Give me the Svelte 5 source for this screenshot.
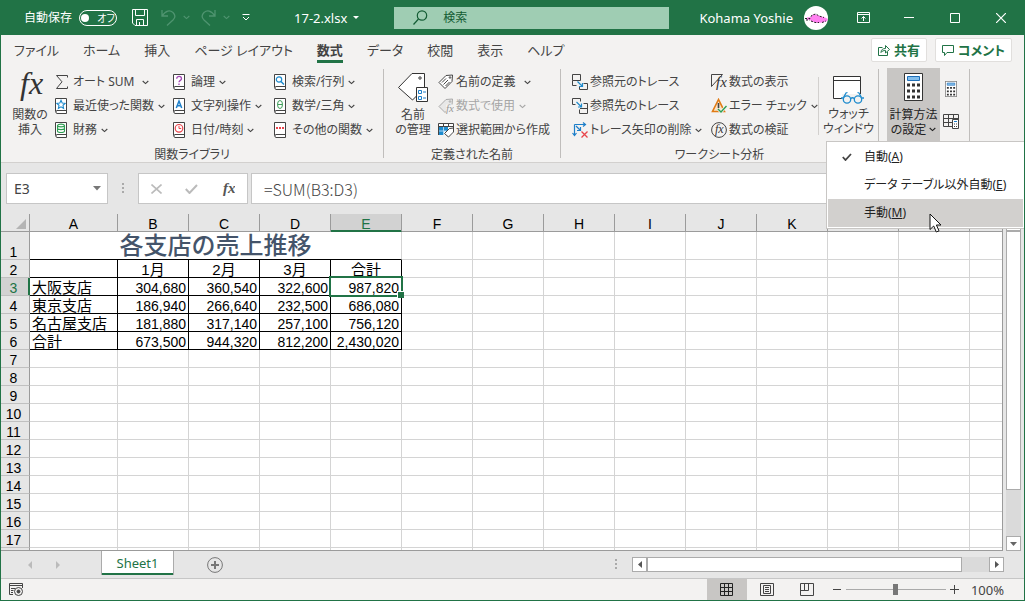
<script>
  const tabs = ['ファイル', 'ホーム', '挿入', 'ページ レイアウト', '数式', 'データ', '校閲', '表示', 'ヘルプ'];
  const library = [
    [
      { icon: 'sigma', text: 'オート SUM', arrow: true, wide: true },
      { icon: 'star', text: '最近使った関数', arrow: true },
      { icon: 'finance', text: '財務', arrow: true }
    ],
    [
      { icon: 'logic', text: '論理', arrow: true },
      { icon: 'text', text: '文字列操作', arrow: true },
      { icon: 'clock', text: '日付/時刻', arrow: true }
    ],
    [
      { icon: 'lookup', text: '検索/行列', arrow: true },
      { icon: 'math', text: '数学/三角', arrow: true },
      { icon: 'more', text: 'その他の関数', arrow: true }
    ]
  ];
  const names = [
    { icon: 'tag', text: '名前の定義', arrow: true, wide: true },
    { icon: 'tagfx', text: '数式で使用', arrow: true, disabled: true },
    { icon: 'select', text: '選択範囲から作成' }
  ];
  const audit = [
    [
      { icon: 'precedents', text: '参照元のトレース' },
      { icon: 'dependents', text: '参照先のトレース' },
      { icon: 'remove', text: 'トレース矢印の削除', arrow: true, wide: true }
    ],
    [
      { icon: 'show', text: '数式の表示' },
      { icon: 'error', text: 'エラー チェック', arrow: true, wide: true },
      { icon: 'evaluate', text: '数式の検証' }
    ]
  ];
  const cols = [...'ABCDEFGHIJKLM', ''];
  const rows = Array.from({ length: 17 }, (_, i) => i + 2);
  const data = {
    2: ['', '1月', '2月', '3月', '合計'],
    3: ['大阪支店', '304,680', '360,540', '322,600', '987,820'],
    4: ['東京支店', '186,940', '266,640', '232,500', '686,080'],
    5: ['名古屋支店', '181,880', '317,140', '257,100', '756,120'],
    6: ['合計', '673,500', '944,320', '812,200', '2,430,020']
  };
</script>

{#snippet chevron()}
  <svg class="chev" width="7" height="5" viewBox="0 0 7 5" fill="none" stroke="currentColor" stroke-width="1.100"><path d="M.7 1 3.500 3.600 6.300 1" /></svg>
{/snippet}

{#snippet fx(color, x, y, size)}
  <text {x} {y} font-family="Liberation Serif, serif" font-style="italic" font-size={size} fill={color} stroke="none">fx</text>
{/snippet}

{#snippet icon(name)}
  <svg class="ico" width="16" height="16" viewBox="0 0 16 16" fill="none" stroke="#444" aria-hidden="true">
    {#if name === 'sigma'}
      <path d="M12.500 3.500V1.500H1.500L7 7.800 1.500 14.500H12.500V12.500" />
    {:else if ['star', 'finance', 'logic', 'text', 'clock', 'lookup', 'math', 'more'].includes(name)}
      <path d="M.5 13.500V.5H11.500V12.500H2C.5 12.500.5 15.500 2 15.500H11.500V12" fill="#fff" />
      {#if name === 'star'}
        <path d="m6 2.300 1.200 2.700 2.900.3-2.100 2 .6 3L6 8.800l-2.600 1.500.6-3-2.100-2 2.900-.3z" stroke="#1e8bcd" stroke-width="1.100" />
      {:else if name === 'finance'}
        <path d="M2.500 3.500v5.500c0 2 7 2 7 0V3.500c0-1.800-7-1.800-7 0c0 1.800 7 1.800 7 0M2.500 6.300c0 1.800 7 1.800 7 0" stroke="#2e9e53" stroke-width="1.100" />
      {:else if name === 'logic'}
        <path d="M3.700 4.700c0-3 4.800-3 4.800 0C8.500 6.500 6 6.300 6 8.300M6 9.500v1.400" stroke="#a349b5" stroke-width="1.300" />
      {:else if name === 'text'}
        <path d="M3.300 10 6 3l2.700 7M4.200 7.800h3.600" stroke="#1e7fc9" stroke-width="1.500" />
      {:else if name === 'clock'}
        <circle cx="6" cy="6.300" r="3.800" stroke="#e8434a" stroke-width="1.200" /><path d="M6 3.800V6.500h2.200" stroke="#e8434a" />
      {:else if name === 'lookup'}
        <circle cx="5" cy="5.500" r="2.700" stroke="#1e8bcd" stroke-width="1.200" /><path d="m7 7.500 3 3" stroke="#1e8bcd" stroke-width="1.500" />
      {:else if name === 'math'}
        <ellipse cx="6" cy="6.500" rx="2.500" ry="4" stroke="#3d9e58" /><path d="M3.500 6.500h5" stroke="#3d9e58" />
      {:else}
        <path d="M2 6h2m1 0h2m1 0h2" stroke="#e8434a" stroke-width="2" />
      {/if}
    {:else if name === 'tag' || name === 'tagfx'}
      <path d="M1 8.500 8 1.500 14.500 1 14 7.500 7 14.500z" fill={name === 'tag' ? '#fff' : '#e8e8e8'} stroke={name === 'tag' ? '#444' : '#aaa'} />
      <circle cx="12" cy="3.500" r=".8" stroke={name === 'tag' ? '#444' : '#aaa'} />
      {#if name === 'tag'}
        <path d="m4 8.500 4-4M5.500 10.500l4.500-4.500M7.500 12l4-4" />
      {:else}
        <path d="M8 6.500h9v10H8z" fill="#f3f2f1" stroke="none" />
        {@render fx('#999', 8, 14, 11)}
      {/if}
    {:else if name === 'select'}
      <path d="M.5 1.500h15v11H.5z" fill="#fff" stroke="none" />
      <path d="M1 5h9v4H6v4H1z" fill="#1e8bcd" stroke="none" />
      <path d="M.5 9h8M5.500 5v8" stroke="#a9d3f2" />
      <path d="M.5 13V1.500h15V6M.5 4.500h15M5.500 1.500v3M10.500 1.500v3" />
      <path d="m6.500 11.500 5-5 4-.5v4l-5 5z" fill="#fff" />
    {:else if name === 'precedents'}
      <path d="M.5.500h8v6h-8zM.5 6.500v5h4M11.500 9.500h4v6h-8v-3" /><path d="m5.500 7.500 5 5M10.500 9v3.500H7" stroke="#1e8bcd" stroke-width="1.200" />
    {:else if name === 'dependents'}
      <path d="M3.500 6.500h-3v-6h8v3M11.500 5.500h4v10h-8v-4M8 10.500h7.500" /><path d="m4.500 4 5 5M9.500 5.500V9H6" stroke="#1e8bcd" stroke-width="1.200" />
    {:else if name === 'remove'}
      <path d="M2.500 2.500V13M.5 11l2 2.500 2-2.500M2.500 2.500H13M11 .5l2.500 2-2.500 2M4 4l4 4M8.500 5v3.500H5" stroke="#1e7fc9" stroke-width="1.200" />
      <path d="m9.500 9.500 6 6m0-6-6 6" stroke="#e8434a" stroke-width="1.300" />
    {:else if name === 'show'}
      <path d="M11.500.5H.5v12L11.500.5" />{@render fx('#333', 5, 13, 15)}
    {:else if name === 'error'}
      <path d="M7.500 1.500 1.500 13.500h12z" fill="#fbe3c8" stroke="#e07b14" stroke-width="1.600" /><path d="M7.500 5v5M7.500 11v1.500" stroke-width="1.600" />
      <path d="m7 11 3 3 5.500-6" stroke="#f3f2f1" stroke-width="3" /><path d="m7 11 3 3 5.500-6" stroke="#2e9e53" stroke-width="1.400" />
    {:else if name === 'evaluate'}
      <circle cx="8" cy="8" r="7.400" />{@render fx('#333', 4, 11, 12)}
    {/if}
  </svg>
{/snippet}

{#snippet command(c)}
  <button class="cmd" class:wide={c.wide} disabled={c.disabled}>
    {@render icon(c.icon)}<span>{c.text}</span>
    {#if c.arrow}{@render chevron()}{/if}
  </button>
{/snippet}

{#snippet calculator(w, h)}
  <svg width={w} height={h} viewBox="0 0 19 28" preserveAspectRatio="none" aria-hidden="true">
    <path d="M.5.500h18v27H.5z" fill="#fff" stroke="#333" /><path d="M3.500 3.500h12v4h-12z" fill="#83beec" stroke="#1e6fb8" />
    <path d="M3 12h13M3 18h13M3 24h13" stroke="#333" stroke-width="3" stroke-dasharray="3 2" />
  </svg>
{/snippet}

<div class="window">
  <header class="title">
    <div class="quick">
      <span id="autosave">自動保存</span>
      <button class="switch" role="switch" aria-checked="false" aria-labelledby="autosave"><i></i>オフ</button>
      <button class="save" aria-label="上書き保存"><svg width="16" height="17" viewBox="0 0 16 17" fill="none" stroke="#fff"><path d="M.5.500h15v16H3L.5 14zM3.500.5v6h9v-6M4.500 16.500v-6h7v6M7.500 13v3" /></svg></button>
      <button class="undo dim" aria-label="元に戻す"><svg width="15" height="17" viewBox="0 0 15 17" fill="none" stroke="currentColor" stroke-width="1.300"><path d="M1 1v6h6M1 7C5 1 9 1 12 3.500c3 3 1.500 6 0 7.500L6 16.500" /></svg>{@render chevron()}</button>
      <button class="redo dim" aria-label="やり直し"><svg width="15" height="17" viewBox="0 0 15 17" fill="none" stroke="currentColor" stroke-width="1.300"><path d="M14 1v6H8M14 7C10 1 6 1 3 3.500c-3 3-1.500 6 0 7.500l6 5.500" /></svg>{@render chevron()}</button>
      <button aria-label="クイック アクセス ツール バーのユーザー設定"><svg width="8" height="7" viewBox="0 0 8 7" fill="none" stroke="#fff"><path d="M.5.500h7M1 3l3 3 3-3" /></svg></button>
    </div>
    <button class="doc">17-2.xlsx <svg width="6" height="3" viewBox="0 0 6 3"><path d="M0 0h6L3 3z" fill="#fff" /></svg></button>
    <label class="search">
      <svg width="15" height="15" viewBox="0 0 15 15" fill="none" stroke="#135c34" stroke-width="1.200"><circle cx="9" cy="5.500" r="4.700" /><path d="M5.500 9 .5 14.500" /></svg>
      <input type="text" placeholder="検索" aria-label="検索" />
    </label>
    <button class="user">Kohama Yoshie
      <svg width="24" height="24" viewBox="0 0 24 24"><circle cx="12" cy="12" r="12" fill="#fff" /><path d="M3 11.500 7 11l1.500-2.500H12l4 1.500 5 1.500 3 1.500-1 2-4 1.500-6 .5-5-1.500-2-1.500-4-.5z" fill="#ff80f0" /><path d="M1 12.500h5l2-3.500 4-1 3 2 5 1.500M2 14h4m1 1 4 1.500h4m3 0 4-1.500" fill="none" stroke="#222" stroke-dasharray="2 1.500" /></svg>
    </button>
    <div class="controls">
      <button aria-label="リボンの表示オプション"><svg width="13" height="11" viewBox="0 0 13 11" fill="none" stroke="#fff"><path d="M.5.500h12v10H.5zM.5 2.500h12M6.500 9V4.500M4.500 6.500l2-2 2 2" /></svg></button>
      <button aria-label="最小化"><svg width="10" height="11" viewBox="0 0 10 11" stroke="#fff"><path d="M0 5.500h10" /></svg></button>
      <button aria-label="最大化"><svg width="10" height="10" viewBox="0 0 10 10" fill="none" stroke="#fff"><path d="M.5.500h9v9h-9z" /></svg></button>
      <button aria-label="閉じる"><svg width="10" height="10" viewBox="0 0 10 10" stroke="#fff" stroke-width="1.200"><path d="m0 0 10 10M10 0 0 10" /></svg></button>
    </div>
  </header>

  <nav class="tabs">
    {#each tabs as t}<button class:active={t === '数式'}><span>{t}</span></button>{/each}
    <div class="actions">
      <button><svg width="12" height="12" viewBox="0 0 12 12" fill="none" stroke="#217346"><path d="M4.500 3.500h-4v8h9V8M3 8.500c0-3 2-4 4.500-4v-3l4 4-4 3.500V6.500C5.500 6.500 4 7 3 8.500z" /></svg>共有</button>
      <button><svg width="12" height="11" viewBox="0 0 12 11" fill="none" stroke="#217346"><path d="M.5.500h11v7H5l-2.500 3v-3h-2z" /></svg>コメント</button>
    </div>
  </nav>

  <section class="ribbon">
    <div class="group library">
      <div class="body">
        <button class="big"><svg width="28" height="31" viewBox="0 0 28 31" aria-hidden="true">{@render fx('#333', 4, 22, 32)}</svg><span>関数の<br />挿入</span></button>
        {#each library as list}<div class="list">{#each list as c}{@render command(c)}{/each}</div>{/each}
      </div>
      <h2>関数ライブラリ</h2>
    </div>
    <div class="group names">
      <div class="body">
        <button class="big">
          <svg width="30" height="31" viewBox="0 0 30 31" fill="none" stroke="#333"><path d="M14 1.500h12.500V16l-12 12L.5 15.500z" fill="#fff" /><circle cx="22" cy="6" r="1.200" /><path d="M18.500 15.500h11v14h-11z" fill="#fff" /><path d="M20.500 18.500h3v3h-3zM20.500 24.500h3v3h-3zM25 20h3M25 26h3" stroke="#1e7fc9" /></svg>
          <span>名前<br />の管理</span>
        </button>
        <div class="list">{#each names as c}{@render command(c)}{/each}</div>
      </div>
      <h2>定義された名前</h2>
    </div>
    <div class="group audit">
      <div class="body">
        {#each audit as list}<div class="list">{#each list as c}{@render command(c)}{/each}</div>{/each}
        <button class="big watch">
          <svg width="31" height="29" viewBox="0 0 31 29" fill="none" stroke="#333"><path d="M.5.500h27v22H.5zM.5 4.500h27" fill="#fff" /><path d="M9 18h22v9H9z" fill="#f3f2f1" stroke="none" /><g stroke="#1e8bcd" stroke-width="1.300"><circle cx="14" cy="23.500" r="3.700" /><circle cx="25" cy="23.500" r="3.700" /><path d="M17.700 22.500c1-1 2.600-1 3.600 0M10.500 21.500 13 17l1.500-.5M28.500 21.500 26 17l-1.500-.5M8 22h2.500M28.500 22H31" /></g></svg>
          <span>ウォッチ<br />ウィンドウ</span>
        </button>
      </div>
      <h2>ワークシート分析</h2>
    </div>
    <div class="group calc">
      <div class="body">
        <button class="big pressed" aria-expanded="true">{@render calculator(19, 28)}<span>計算方法<br />の設定 {@render chevron()}</span></button>
        <div class="minis">
          <button aria-label="再計算実行">{@render calculator(12, 16)}</button>
          <button aria-label="シート再計算"><svg width="16" height="16" viewBox="0 0 16 16" fill="none" stroke="#444"><path d="M.5 1.500h15v12H.5zM.5 5.500h15M.5 9.500h9M5.500 1.500v12M10.500 1.500v5" /><path d="M9.500 6.500h6v9h-6z" fill="#fff" /><path d="M11 8.500h3" stroke="#1e7fc9" /><path d="M11 11h3M11 13.500h3" stroke-dasharray="1 1" /></svg></button>
        </div>
      </div>
    </div>
    <div class="menu" role="menu">
      <button role="menuitem"><svg width="10" height="8" viewBox="0 0 10 8" fill="none" stroke="#444" stroke-width="1.800"><path d="m.8 4 2.700 3L9 1" /></svg><span>自動(<u>A</u>)</span></button>
      <button role="menuitem"><span>データ テーブル以外自動(<u>E</u>)</span></button>
      <button role="menuitem" class="hover"><span>手動(<u>M</u>)</span></button>
      <svg class="pointer" width="13" height="20" viewBox="0 0 13 20"><path d="M1 1v15.500l3.700-3.500 2.600 6 2.700-1.200-2.600-5.800H12z" fill="#fff" stroke="#111" /></svg>
    </div>
  </section>

  <div class="formula">
    <label class="namebox"><input value="E3" aria-label="名前ボックス" /><svg width="8" height="5" viewBox="0 0 8 5"><path d="M0 0h8L4 4.500z" fill="#777" /></svg></label>
    <span class="dots"></span>
    <div class="entry">
      <button aria-label="キャンセル"><svg width="11" height="10" viewBox="0 0 11 10" stroke="#bbb" stroke-width="1.600"><path d="m.5.500 10 9M10.500.5l-10 9" /></svg></button>
      <button aria-label="入力"><svg width="13" height="10" viewBox="0 0 13 10" fill="none" stroke="#bbb" stroke-width="2"><path d="m.8 5 3.700 4L12 1" /></svg></button>
      <button aria-label="関数の挿入"><svg width="14" height="16" viewBox="0 0 14 16" font-weight="700">{@render fx('#555', 2, 12, 15)}</svg></button>
    </div>
    <input class="fbox" value="=SUM(B3:D3)" aria-label="数式バー" />
  </div>

  <main>
    <div class="sheet">
      <table>
        <colgroup><col class="c0" /><col class="ca" />{#each cols.slice(1) as c}<col class="cn" />{/each}</colgroup>
        <thead>
          <tr><th class="corner"><svg width="10" height="10" viewBox="0 0 10 10"><path d="M10 0v10H0z" fill="#b4b4b4" /></svg></th>{#each cols as c}<th class:sel={c === 'E'}>{c}</th>{/each}</tr>
        </thead>
        <tbody>
          <tr class="first"><th>1</th><td colspan="5" class="heading">各支店の売上推移</td>{#each cols.slice(5) as c}<td></td>{/each}</tr>
          {#each rows as r}
            <tr>
              <th class:sel={r === 3}>{r < 18 ? r : ''}</th>
              {#each cols as c, i}
                <td class:boxed={r < 7 && i < 5} class:mid={r === 2} class:num={r > 2 && i > 0} class:current={r === 3 && i === 4}>{data[r]?.[i] ?? ''}</td>
              {/each}
            </tr>
          {/each}
        </tbody>
      </table>
    </div>
    <div class="vscroll">
      <button aria-label="上へ"><svg width="7" height="4" viewBox="0 0 7 4"><path d="M0 4h7L3.500 0z" fill="#666" /></svg></button>
      <div class="track"><div class="thumb"></div></div>
      <button aria-label="下へ"><svg width="7" height="4" viewBox="0 0 7 4"><path d="M0 0h7L3.500 4z" fill="#666" /></svg></button>
    </div>
  </main>

  <div class="sheets">
    <div class="arrows"><svg width="4" height="8" viewBox="0 0 4 8"><path d="M4 0v8L0 4z" fill="#bbb" /></svg><svg width="4" height="8" viewBox="0 0 4 8"><path d="M0 0v8l4-4z" fill="#bbb" /></svg></div>
    <button class="tab">Sheet1</button>
    <button class="add" aria-label="新しいシート"><svg width="16" height="16" viewBox="0 0 16 16" fill="none" stroke="#777"><circle cx="8" cy="8" r="7.400" /><path d="M8 4v8M4 8h8" stroke-width="2" /></svg></button>
    <span class="dots"></span>
    <div class="hscroll">
      <button aria-label="左へ"><svg width="4" height="7" viewBox="0 0 4 7"><path d="M4 0v7L0 3.500z" fill="#555" /></svg></button>
      <div class="track"><div class="thumb"></div></div>
      <button aria-label="右へ"><svg width="4" height="7" viewBox="0 0 4 7"><path d="M0 0v7l4-3.500z" fill="#555" /></svg></button>
    </div>
  </div>

  <footer>
    <button class="macro" aria-label="マクロの記録"><svg width="15" height="13" viewBox="0 0 15 13" fill="none" stroke="#444"><path d="M4 11.500H.5V.500h13V5M.5 2.500h13M2 5.500h4M2 7.500h2.500M2 9.500h2" /><circle cx="9.500" cy="8.500" r="4" fill="#f3f2f1" /><circle cx="9.500" cy="8.500" r="1.500" fill="#444" /></svg></button>
    <div class="views">
      <button class="on" aria-label="標準"><svg width="13" height="13" viewBox="0 0 13 13" fill="none" stroke="#222"><path d="M.5.500h12v12H.5zM.5 4.500h12M.5 8.500h12M4.500.5v12M8.500.5v12" /></svg></button>
      <button aria-label="ページ レイアウト"><svg width="14" height="13" viewBox="0 0 14 13" fill="none" stroke="#444"><path d="M.5.500h13v12H.5zM3.500 2.500h7v8h-7zM5 4.500h4M5 6.500h4M5 8.500h4" /></svg></button>
      <button aria-label="改ページ プレビュー"><svg width="14" height="13" viewBox="0 0 14 13" fill="none" stroke="#444"><path d="M.5.500h13v12H.5zM.5 7.500h8v-7M4.500.5v7" /></svg></button>
    </div>
    <button class="zoomer" aria-label="縮小"><svg width="9" height="9" viewBox="0 0 9 9" stroke="#444"><path d="M0 4.500h8" /></svg></button>
    <input type="range" min="0" max="100" value="50" aria-label="ズーム" />
    <button class="zoomer" aria-label="拡大"><svg width="9" height="9" viewBox="0 0 9 9" stroke="#444"><path d="M0 4.500h9M4.500 0v9" /></svg></button>
    <span class="pct">100%</span>
  </footer>
</div>

<style>
  :global(body) { margin: 0; }
  * { box-sizing: border-box; }
  .window { display: flex; flex-direction: column; height: 100vh; overflow: hidden; border: 1px solid #217346; border-top: 0; background: #e6e6e6; color: #444; font: 12px/16px "Noto Sans", "Noto Sans CJK JP", sans-serif; font-feature-settings: "palt"; }
  button { display: flex; align-items: center; justify-content: center; flex: none; padding: 0; border: 0; background: none; color: inherit; font: inherit; font-feature-settings: inherit; white-space: nowrap; }
  input { min-width: 0; margin: 0; padding: 0; border: 0; outline: 0; background: none; color: inherit; font: inherit; }
  svg { display: block; flex: none; }

  .title { display: flex; align-items: center; flex: none; height: 35px; background: #217346; color: #fff; }
  .quick { display: flex; align-items: center; padding-left: 23px; }
  .switch { width: 38px; height: 16px; margin: 0 15px 0 7px; gap: 8px; border: 1px solid #fff; border-radius: 8px; font-size: 10px; }
  .switch i { width: 8px; height: 8px; border-radius: 50%; background: #fff; }
  .undo { margin-left: 13px; }
  .redo { margin: 0 12px 0 11px; }
  .dim { gap: 7px; color: #4f9470; }
  .doc { gap: 6px; margin: 0 35px 0 44px; font-size: 13px; }
  .search { display: flex; align-items: center; flex: 1; gap: 15px; height: 22px; padding-left: 19px; background: #9fcdb3; color: #135c34; }
  .search input { flex: 1; }
  .search input::placeholder { color: #135c34; opacity: 1; }
  .user { gap: 11px; margin: 0 12px 0 30px; font-size: 13px; }
  .controls { display: flex; }
  .controls button { width: 46px; height: 34px; }

  .tabs { display: flex; flex: none; height: 31px; padding-left: 1px; background: #f3f2f1; font-size: 13px; }
  .tabs > button { padding: 0 12px; }
  .tabs > button span { height: 25px; padding-top: 4px; border-bottom: 3px solid transparent; }
  .tabs .active { font-weight: 700; }
  .tabs .active span { border-color: #217346; }
  .actions { display: flex; gap: 8px; margin: 3px 12px 4px auto; }
  .actions button { gap: 4px; padding: 0 6px; border: 1px solid #e1dfdd; border-radius: 2px; background: #fff; color: #217346; font-weight: 700; }

  .ribbon { display: flex; position: relative; flex: none; height: 97px; padding-top: 3px; border-bottom: 1px solid #d2d0ce; background: #f3f2f1; }
  .group { display: flex; flex-direction: column; flex: none; height: 89px; border-right: 1px solid #c0bebc; }
  .body { display: grid; height: 72px; }
  .library .body { grid-template-columns: 54px 118px 101px 109px; }
  .names .body { grid-template-columns: 54px 122px; }
  .audit .body { grid-template-columns: 139px 118px 60px; }
  .calc .body { grid-template-columns: 53px 29px; padding-left: 8px; }
  h2 { margin: 0; padding-top: 6px; font-size: 12px; font-weight: 400; line-height: 16px; text-align: center; }
  .big { flex-direction: column; gap: 4px; height: 68px; line-height: 15px; justify-content: flex-end; }
  .big .chev { display: inline-block; vertical-align: 2px; }
  .library .big, .names .big { margin-left: 4px; }
  .watch { height: 58px; margin-top: 8px; gap: 1px; border-left: 1px solid #d2d0ce; justify-content: center; }
  .pressed { height: 73px; margin-top: -1px; padding-bottom: 4px; gap: 6px; background: #c8c6c4; color: #222; }
  .list { display: flex; flex-direction: column; padding-top: 1px; }
  .audit .list { padding-left: 11px; }
  .cmd { height: 24px; justify-content: flex-start; gap: 2px; }
  .cmd .chev { margin-left: 2px; }
  .cmd.wide .chev { margin-left: 6px; }
  .audit .cmd.wide .chev { margin-left: 2px; }
  .cmd:disabled { color: #a6a6a6; }
  .minis { display: grid; grid-template-rows: 40px 24px; justify-items: center; padding-right: 7px; }
  .menu { position: absolute; top: 75px; right: -1px; z-index: 2; width: 199px; padding: 1px; border: 1px solid #c8c6c4; background: #fff; color: #222; }
  .menu button { width: 100%; height: 28px; justify-content: flex-start; padding-left: 36px; font-size: 12px; }
  .menu button svg { margin: 0 12px 0 -22px; }
  .menu .hover { background: #d2d0ce; }
  .pointer { position: absolute; left: 102px; top: 71px; }

  .formula { display: flex; flex: none; height: 51px; padding: 10px 6px 10px 5px; }
  .namebox, .entry, .fbox { border: 1px solid #c6c6c6; background: #fff; }
  .namebox { display: flex; align-items: center; width: 102px; padding: 0 6px 0 7px; font-size: 14px; }
  .namebox input { flex: 1; }
  .dots { width: 3px; height: 11px; background: repeating-linear-gradient(#aaa 0 2px, transparent 2px 4px); }
  .formula .dots { width: 2px; margin: 10px 14px; }
  .entry { display: flex; width: 110px; justify-content: space-around; }
  .fbox { flex: 1; margin-left: 3px; padding-left: 12px; font-family: "Noto Sans CJK JP", sans-serif; font-size: 16px; font-weight: 300; }

  main { display: flex; flex: 1; min-height: 0; }
  .sheet { flex: 1; min-width: 0; overflow: hidden; border-bottom: 1px solid #9b9b9b; background: linear-gradient(#e6e6e6 17px, #fff 17px); border-right: 1px solid #9b9b9b; }
  table { width: 1040px; border-spacing: 0; table-layout: fixed; color: #000; font-family: "Liberation Sans", "Noto Sans CJK JP", sans-serif; font-size: 14px; line-height: 14px; font-feature-settings: normal; }
  .c0 { width: 29px; }
  .ca { width: 88px; }
  .cn { width: 71px; }
  th { height: 18px; padding: 3px 0 0; border: 0 solid #9b9b9b; border-width: 0 1px 1px 0; background: #e6e6e6; font-weight: 400; }
  tbody th { border-bottom-color: #c0c0c0; padding-right: 3px; }
  .first th { height: 28px; vertical-align: bottom; }
  .corner { padding: 0; }
  .corner svg { margin: 2px 0 0 15px; }
  th.sel { background: #d2d2d2; color: #217346; }
  thead th.sel { box-shadow: inset 0 -1px #217346; border-bottom-color: #217346; }
  tbody th.sel { border-right-color: #217346; box-shadow: inset -1px 0 #217346; }
  td { height: 18px; padding: 3px 2px 0; border: 0 solid #d4d4d4; border-width: 0 1px 1px 0; overflow: visible; white-space: nowrap; font-size: 15px; }
  td.boxed { border-color: #000; }
  .mid { text-align: center; }
  .num { text-align: right; font-size: 14px; }
  .heading { padding-top: 1px; border-bottom-color: #000; color: #44546a; font-size: 24px; font-weight: 500; line-height: 26px; text-align: center; }
  .current { position: relative; }
  .current::before { content: ""; position: absolute; inset: -2px -2px -2px -2px; border: 2px solid #217346; }
  .current::after { content: ""; position: absolute; right: -3px; bottom: -3px; width: 6px; height: 6px; border: solid #fff; border-width: 1px 0 0 1px; background: #217346; }

  .vscroll { display: flex; flex-direction: column; flex: none; width: 15px; margin: 2px 3px 0; }
  .vscroll button, .hscroll button { width: 15px; height: 15px; border: 1px solid #ababab; background: #fff; }
  .track { flex: 1; background: #dadada; }
  .thumb { border: 1px solid #ababab; background: #fff; }
  .vscroll .thumb { height: 85%; }

  .sheets { display: flex; align-items: center; flex: none; height: 27px; padding-right: 20px; }
  .arrows { display: flex; gap: 24px; width: 100px; padding-left: 27px; }
  .tab { align-self: flex-start; width: 73px; height: 24px; border: solid #ababab; border-width: 0 1px 0; box-shadow: inset 0 -2px #217346; background: #fff; color: #217346; font-size: 13px; }
  .add { margin-left: 33px; }
  .sheets .dots { width: 2px; margin-left: auto; }
  .hscroll { display: flex; width: 372px; margin-left: 15px; }
  .hscroll .thumb { width: 92%; height: 15px; }

  footer { display: flex; align-items: center; flex: none; height: 22px; padding: 0 20px 0 8px; border-top: 1px solid #c6c6c6; background: #f3f2f1; }
  .views { display: flex; margin: 0 6px 0 auto; }
  .views button { width: 40px; height: 21px; }
  .views .on { background: #c8c6c4; }
  input[type="range"] { width: 100px; height: 13px; margin: 0 4px; appearance: none; background: linear-gradient(#aaa, #aaa) center / 100% 1px no-repeat; }
  input[type="range"]::-webkit-slider-thumb { appearance: none; width: 5px; height: 11px; background: #777; }
  .pct { margin-left: 12px; font-size: 13px; }
</style>
